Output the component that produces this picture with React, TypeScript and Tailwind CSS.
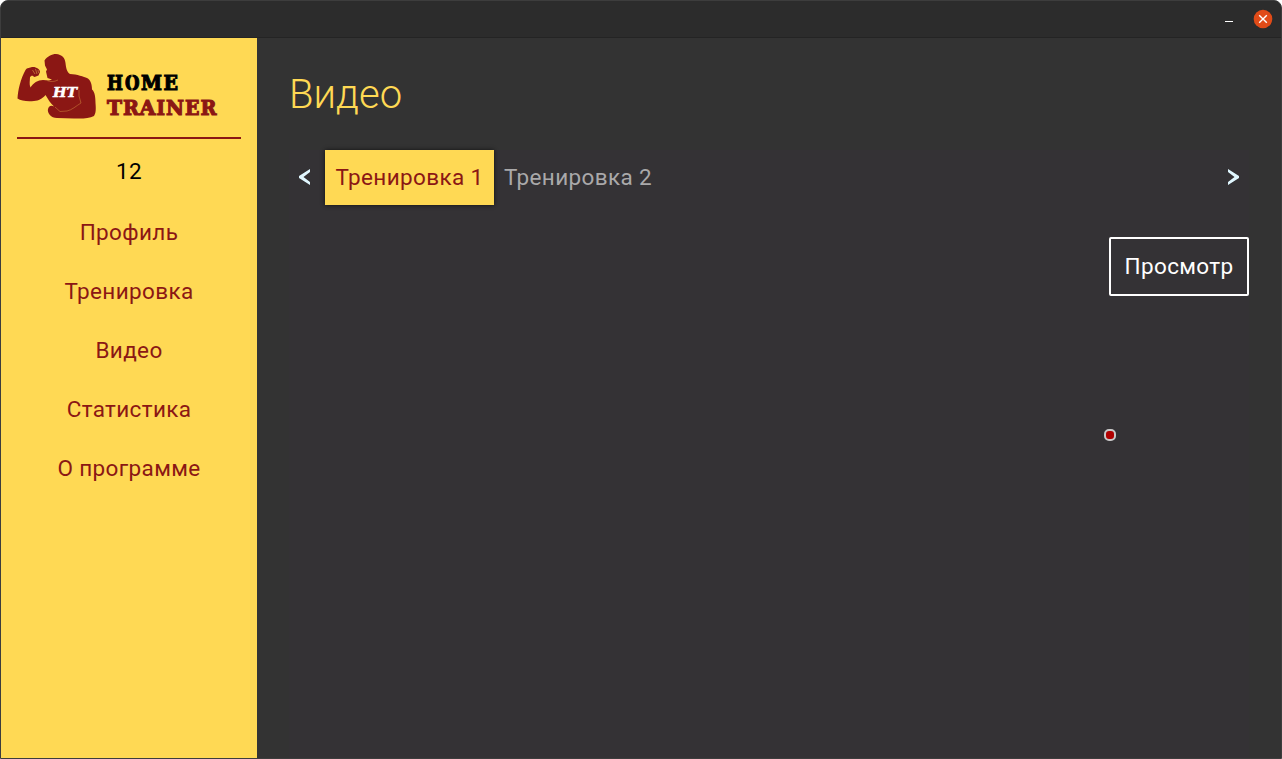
import React from "react";

const items = ["Профиль", "Тренировка", "Видео", "Статистика", "О программе"];

function Athlete() {
  return (
    <svg width="82" height="68" viewBox="16 52 82 68" className="shrink-0">
      <path
        fill="#8b1714"
        d="M17.5 98.5 C18 90 20.5 79 25.5 70 C27 67.5 30 68 32 67 C36 66.5 40 69 40 72 L38.5 75.5 L34.5 77 L32 75.5 L30 77 C30 81 29 84 30.5 87.5 C33 83 38 80 43 80 L49 80.5 L52 79.5 L47.5 78 L46 71.5 L47 69.5 L45 65.5 L44.5 60.5 C47 56.5 52 54 56 54 C62 54.5 65 58 65.5 63 C66 68 67 72 70 74 C77 74 84 77 87 78 C90.5 80 92 84 92 89.5 C95 92 95.5 98 95.5 103 C96 109 96 113 94 116 C89 119 81 118.5 74 118.5 L57 118 C51 118 47 113 48 109 C49 106 51 105 54 106.5 C50 103 48.5 99.5 45.5 95 C42 99 39 100.5 34 101 C27 101.5 21 101 17.5 98.5 Z"
      />
      <path d="M47 80.5 C50 82 54 82 58 80 M79 90 L79 96 L81 103 C76 106 72 110 67 111 L60 111.5 L55 107" fill="none" stroke="#c87838" strokeWidth=".6" />
      <path d="M32.5 70 L35 74 M35.5 69 L37 74 M38 70 L38.5 73" fill="none" stroke="#d99a48" strokeWidth=".6" />
      <text x="53" y="97" fill="#fff" stroke="#fff" strokeWidth=".5" fontFamily="DejaVu Serif" fontWeight="700" fontStyle="italic" fontSize="13.3" textLength="24" lengthAdjust="spacingAndGlyphs">HT</text>
    </svg>
  );
}

export default function App() {
  return (
    <div className="h-[759px] w-[1282px] bg-white font-[Roboto,sans-serif]">
      <div className="flex h-full flex-col overflow-hidden rounded-t-[8px] border border-[#3d3d3d] bg-[#333333]">
        <header className="flex h-[37px] shrink-0 items-center justify-end border-b border-[#242424] bg-[#2c2c2c] pr-[8px]">
          <span className="mt-[5px] mr-[20px] h-px w-[8px] bg-white" />
          <svg width="20" height="20" viewBox="0 0 20 20">
            <circle cx="10" cy="10" r="9.3" fill="#e04b18" />
            <path d="M6.2 6.2 L13.8 13.8 M13.8 6.2 L6.2 13.8" stroke="#fff" strokeWidth="1.4" />
          </svg>
        </header>
        <div className="flex min-h-0 flex-1">
          <aside className="flex w-[256px] shrink-0 flex-col bg-[#ffd954] text-[#8b1714]">
            <div className="mx-[16px] flex h-[101px] border-b-2 border-[#8b1714] pt-[14px]">
              <div className="-ml-px"><Athlete /></div>
              <svg width="124" height="54" viewBox="98 66 124 54" className="mt-[14px]" fontFamily="DejaVu Serif" fontWeight="700" fontSize="19.5">
                <g fill="#000" stroke="#000" strokeWidth="1.1">
                  <text x="107" y="89.5" textLength="16" lengthAdjust="spacingAndGlyphs">H</text>
                  <text x="125" y="89.5" textLength="14.5" lengthAdjust="spacingAndGlyphs">O</text>
                  <text x="141" y="89.5" textLength="21" lengthAdjust="spacingAndGlyphs">M</text>
                  <text x="163.5" y="89.5" textLength="14.5" lengthAdjust="spacingAndGlyphs">E</text>
                </g>
                <path d="M132 74 V77 M132 87.500 V91" stroke="#ffd954" strokeWidth="0.8" />
                <g fill="#8b1714" stroke="#8b1714" strokeWidth="1.1">
                  <text x="107" y="114.500" textLength="15" lengthAdjust="spacingAndGlyphs">T</text>
                  <text x="123" y="114.500" textLength="16" lengthAdjust="spacingAndGlyphs">R</text>
                  <text x="139.500" y="114.500" textLength="16" lengthAdjust="spacingAndGlyphs">A</text>
                  <text x="156.500" y="114.500" textLength="8.500" lengthAdjust="spacingAndGlyphs">I</text>
                  <text x="166" y="114.500" textLength="18" lengthAdjust="spacingAndGlyphs">N</text>
                  <text x="185" y="114.500" textLength="14.500" lengthAdjust="spacingAndGlyphs">E</text>
                  <text x="200.500" y="114.500" textLength="16" lengthAdjust="spacingAndGlyphs">R</text>
                </g>
              </svg>
            </div>
            <div className="flex h-[64px] items-center justify-center pt-[2px] text-[22.5px] tracking-[0.36px] text-black">12</div>
            <nav className="flex flex-col">
              {items.map((label) => (
                <a key={label} className="flex h-[59px] items-center justify-center text-[22.5px] tracking-[0.36px]">{label}</a>
              ))}
            </nav>
          </aside>
          <main className="flex flex-1 flex-col pr-[32px] pl-[32px]">
            <h1 className="mt-[33px] h-[79px] text-[40px] leading-[48px] font-light text-[#ffd954]">Видео</h1>
            <section className="flex h-[608px] flex-col bg-[#343235]">
              <div className="flex h-[55px] items-center text-[22.5px] tracking-[0.36px]">
                <svg width="36" height="55" viewBox="289 150 36 55" className="shrink-0">
                  <path d="M310 169 L310 172 L303.5 177 L310 182 L310 185 L299 178 L299 176 Z" fill="#e0f7ff" />
                </svg>
                <div className="flex h-full w-[169px] items-center justify-center bg-[#ffd954] text-[#8b1714] shadow-[0_0_4px_#111]">Тренировка 1</div>
                <div className="ml-[10px] text-[#aaa9aa]">Тренировка 2</div>
                <svg width="36" height="55" viewBox="1213 150 36 55" className="ml-auto shrink-0">
                  <path d="M1228 169 L1228 172 L1234.5 177 L1228 182 L1228 185 L1239 178 L1239 176 Z" fill="#e0f7ff" />
                </svg>
              </div>
              <button className="mt-[32px] flex h-[59px] w-[140px] items-center justify-center self-end rounded-[2px] border-2 border-white text-[22.5px] tracking-[0.36px] text-white">Просмотр</button>
              <span className="mt-[133px] mr-[133px] h-[12px] w-[12px] self-end rounded-[5px] border-2 border-[#c8c8c8] bg-[#b00000]" />
            </section>
          </main>
        </div>
      </div>
    </div>
  );
}
